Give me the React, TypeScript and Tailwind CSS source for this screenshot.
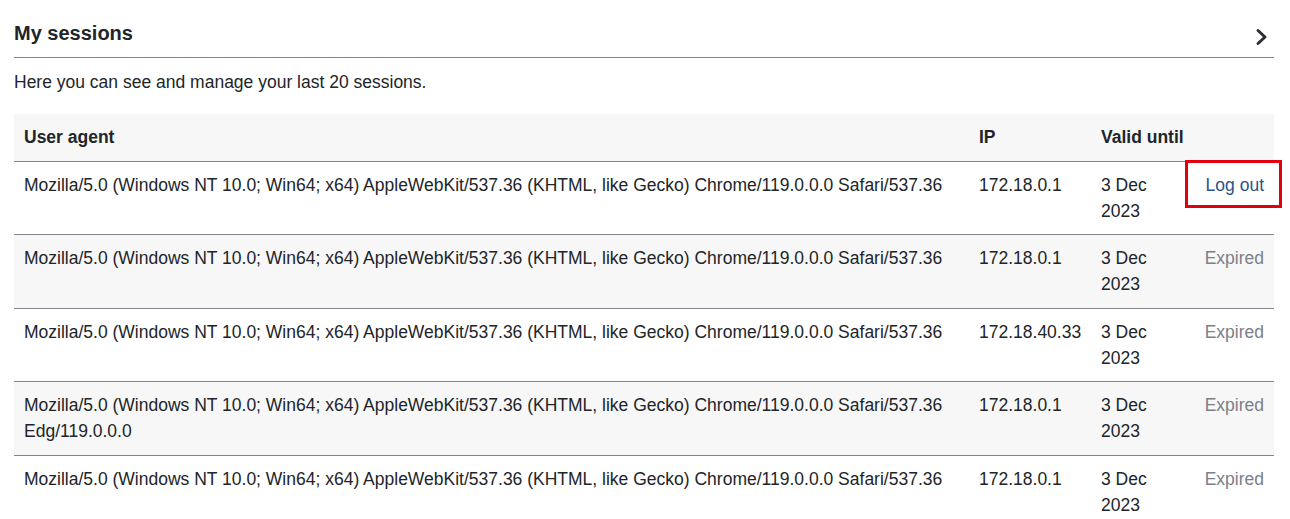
const agent =
  "Mozilla/5.0 (Windows NT 10.0; Win64; x64) AppleWebKit/537.36 (KHTML, like Gecko) Chrome/119.0.0.0 Safari/537.36"

const sessions = [
  { ua: agent, ip: "172.18.0.1", active: true },
  { ua: agent, ip: "172.18.0.1", active: false },
  { ua: agent, ip: "172.18.40.33", active: false },
  { ua: agent + " Edg/119.0.0.0", ip: "172.18.0.1", active: false },
  { ua: agent, ip: "172.18.0.1", active: false },
]

const App = () => {
  return (
    <div className="bg-white text-[#212529] font-['Liberation_Sans',Arial,sans-serif] text-[17.5px] leading-[1.5] pl-[14px] pt-[20px] w-[1290px] h-[519px] overflow-hidden">
      <div className="w-[1260px] flex items-center justify-between border-b border-[#80868c] pb-[11px]">
        <h2 className="text-[20px] leading-[26px] font-bold">My sessions</h2>
        <svg className="mr-[5px] mt-[8px]" width="14" height="18" viewBox="0 0 14 18" fill="none">
          <path d="M3 2.5 L10 9 L3 15.5" stroke="#2b2f33" strokeWidth="3" strokeLinecap="round" strokeLinejoin="round" />
        </svg>
      </div>

      <p className="mt-[11px] mb-[19px]">Here you can see and manage your last 20 sessions.</p>

      <table className="w-[1260px] table-fixed border-collapse">
        <colgroup>
          <col className="w-[955px]" />
          <col className="w-[122px]" />
          <col className="w-[100px]" />
          <col className="w-[83px]" />
        </colgroup>
        <thead>
          <tr className="bg-[#f7f7f7] border-b border-[#80868c] text-left">
            <th className="px-[10px] py-[10px] font-bold">User agent</th>
            <th className="px-[10px] py-[10px] font-bold">IP</th>
            <th className="px-[10px] py-[10px] font-bold whitespace-nowrap">Valid until</th>
            <th className="px-[10px] py-[10px]"></th>
          </tr>
        </thead>
        <tbody>
          {sessions.map((s, i) => (
            <tr key={i} className={`border-b border-[#80868c] align-top ${i % 2 === 1 ? "bg-[#f7f7f7]" : "bg-white"}`}>
              <td className="px-[10px] py-[10px]">{s.ua}</td>
              <td className="px-[10px] py-[10px]">{s.ip}</td>
              <td className="px-[10px] py-[10px]">
                3 Dec
                <br />
                2023
              </td>
              <td className="px-[10px] py-[10px] text-right">
                {s.active ? (
                  <span className="relative inline-block text-[#2c5282]">
                    Log out
                    <span className="absolute -left-[21px] -right-[18px] -top-[12px] -bottom-[10px] border-[3px] border-[#e0000f]"></span>
                  </span>
                ) : (
                  <span className="text-[#7b8088]">Expired</span>
                )}
              </td>
            </tr>
          ))}
        </tbody>
      </table>
    </div>
  )
}

export default App
